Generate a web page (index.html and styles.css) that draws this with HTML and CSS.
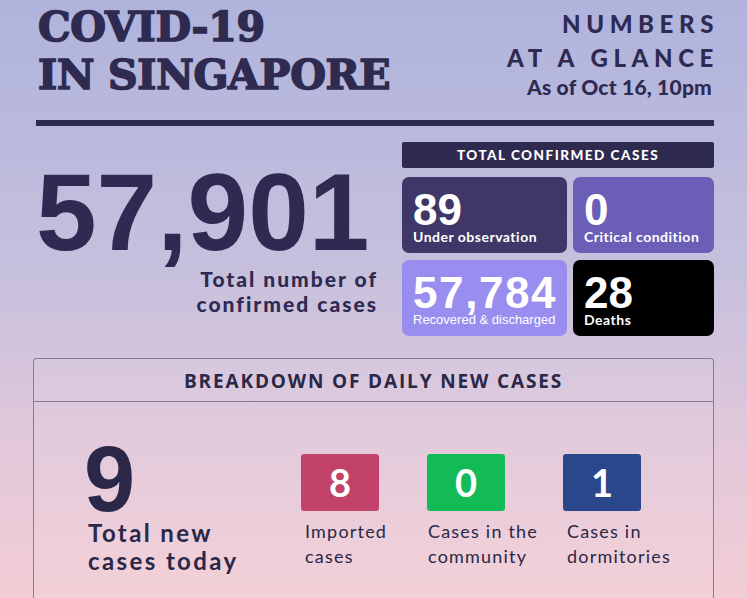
FILE: index.html
```html
<!DOCTYPE html>
<html>
<head>
<meta charset="utf-8">
<link rel="stylesheet" href="styles.css">
</head>
<body>
<div class="page">
  <header class="top">
    <h1 class="title">COVID-19<br>IN SINGAPORE</h1>
    <div class="glance">
      <div class="glance-big">NUMBERS<br>AT A GLANCE</div>
      <div class="asof">As of Oct 16, 10pm</div>
    </div>
  </header>
  <div class="rule"></div>
  <section class="totals">
    <div class="total-left">
      <div class="big-num">57,901</div>
      <div class="big-label">Total number of<br>confirmed cases</div>
    </div>
    <div class="panel">
      <div class="panel-head">TOTAL CONFIRMED CASES</div>
      <div class="cards">
        <div class="card c1"><div class="card-num">89</div><div class="card-label">Under observation</div></div>
        <div class="card c2"><div class="card-num">0</div><div class="card-label">Critical condition</div></div>
        <div class="card c3"><div class="card-num wide">57,784</div><div class="card-label narrow">Recovered &amp; discharged</div></div>
        <div class="card c4"><div class="card-num">28</div><div class="card-label">Deaths</div></div>
      </div>
    </div>
  </section>
  <section class="daily">
    <div class="daily-head">BREAKDOWN OF DAILY NEW CASES</div>
    <div class="daily-body">
      <div class="daily-total">
        <div class="nine">9</div>
        <div class="nine-label">Total new<br>cases today</div>
      </div>
      <div class="breakdown">
        <div class="item i1"><div class="sq red">8</div><div class="item-label">Imported<br>cases</div></div>
        <div class="item i2"><div class="sq green">0</div><div class="item-label">Cases in the<br>community</div></div>
        <div class="item i3"><div class="sq blue">1</div><div class="item-label">Cases in<br>dormitories</div></div>
      </div>
    </div>
  </section>
</div>
</body>
</html>
```
FILE: styles.css
```css
html, body {
  margin: 0;
  padding: 0;
}
body {
  width: 747px;
  height: 598px;
  overflow: hidden;
  background: linear-gradient(180deg, #afb3dc 0%, #c6c0dd 45%, #e2c8da 75%, #f3cdd5 100%);
  color: #2e2a52;
  font-family: Lato, "Open Sans", sans-serif;
}
.page {
  padding: 0 33px 0 33px;
}
.top {
  display: flex;
  justify-content: space-between;
  align-items: flex-start;
  padding: 0 0 0 5px;
}
.title {
  margin: 0;
  padding-top: 3px;
  font-family: "DejaVu Serif", serif;
  font-weight: 900;
  font-size: 41px;
  line-height: 48px;
  letter-spacing: -0.3px;
  color: #2f2a50;
  -webkit-text-stroke: 1.6px #2f2a50;
}
.glance {
  text-align: right;
  padding-top: 7px;
}
.glance-big {
  font-family: Lato, sans-serif;
  font-weight: 900;
  font-size: 24px;
  line-height: 34px;
  letter-spacing: 5.6px;
  margin-right: -5px;
}
.asof {
  font-weight: 900;
  font-size: 21px;
  line-height: 24px;
  letter-spacing: 0.2px;
  margin-right: 2px;
}
.rule {
  height: 6px;
  background: #2f2a50;
  margin: 21px 0 0 3px;
}
.totals {
  display: flex;
  justify-content: space-between;
  margin-top: 16px;
}
.total-left {
  display: flex;
  flex-direction: column;
  align-items: flex-end;
  width: 343px;
}
.big-num {
  align-self: flex-start;
  margin-left: 3px;
  margin-top: 25px;
  font-family: "Liberation Sans", Arial, sans-serif;
  font-weight: 700;
  font-size: 109px;
  line-height: 90px;
  color: #2e2a52;
}
.big-label {
  font-weight: 900;
  font-size: 21px;
  line-height: 25px;
  letter-spacing: 2px;
  text-align: right;
  margin-top: 9px;
  margin-right: -2px;
}
.panel {
  width: 312px;
}
.panel-head {
  height: 26px;
  background: #2f2a50;
  color: #fff;
  font-weight: 900;
  font-size: 13.5px;
  line-height: 26px;
  letter-spacing: 1.5px;
  text-align: center;
  border-radius: 2px;
}
.cards {
  display: grid;
  grid-template-columns: 165px 141px;
  grid-auto-rows: 76px;
  gap: 7px 6px;
  margin-top: 9px;
}
.card {
  border-radius: 7px;
  color: #fff;
  padding: 15px 0 0 11px;
  box-sizing: border-box;
}
.c1 { background: #3f3767; }
.c2 { background: #6b5eb6; }
.c3 { background: #998ef0; }
.c4 { background: #000; }
.card-num {
  font-family: "Liberation Sans", Arial, sans-serif;
  font-weight: 700;
  font-size: 44px;
  line-height: 36px;
}
.card-num.wide {
  letter-spacing: 1.6px;
}
.card-label {
  font-weight: 700;
  font-size: 14px;
  line-height: 18px;
  letter-spacing: 0.5px;
}
.card-label.narrow {
  font-family: "Liberation Sans", Arial, sans-serif;
  font-weight: 400;
  font-size: 13px;
  letter-spacing: 0;
}
.daily {
  margin-top: 22px;
  border: 1px solid #857c9c;
  border-bottom: none;
  border-radius: 4px 4px 0 0;
  height: 260px;
  background: rgba(255, 255, 255, 0.06);
}
.daily-head {
  height: 42px;
  border-bottom: 1px solid #857c9c;
  text-align: center;
  font-family: "Open Sans", sans-serif;
  font-weight: 700;
  font-size: 19px;
  line-height: 44px;
  letter-spacing: 1.85px;
  color: #2a2748;
}
.daily-body {
  display: flex;
  padding: 0 0 0 50px;
}
.daily-total {
  width: 217px;
}
.nine {
  font-family: "Liberation Sans", Arial, sans-serif;
  font-weight: 700;
  font-size: 92px;
  line-height: 92px;
  margin-top: 31px;
  color: #2a2748;
}
.nine-label {
  font-weight: 700;
  font-size: 24px;
  line-height: 28px;
  letter-spacing: 2.4px;
  margin: -6px 0 0 4px;
  color: #2a2748;
}
.breakdown {
  display: flex;
  padding-top: 52px;
}
.i1 { width: 126px; }
.i2 { width: 136px; }
.sq {
  width: 78px;
  height: 57px;
  border-radius: 3px;
  color: #fff;
  font-weight: 700;
  font-size: 38px;
  line-height: 57px;
  text-align: center;
}
.red { background: #c2426a; }
.green { background: #13bb57; }
.blue { background: #2b478c; }
.item-label {
  font-size: 18px;
  line-height: 25px;
  letter-spacing: 1.2px;
  margin: 8px 0 0 4px;
  color: #2a2748;
}
.i2 .item-label {
  margin-left: 1px;
}
```
